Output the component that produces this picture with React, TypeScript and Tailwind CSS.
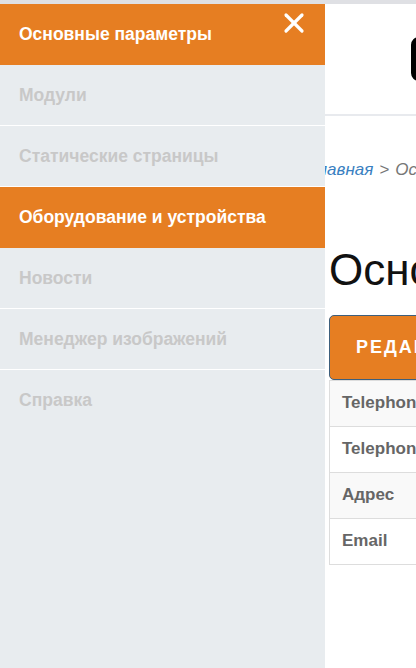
import { X } from "lucide-react";

const menu = [
  { label: "Основные параметры", active: true },
  { label: "Модули", active: false },
  { label: "Статические страницы", active: false },
  { label: "Оборудование и устройства", active: true },
  { label: "Новости", active: false },
  { label: "Менеджер изображений", active: false },
  { label: "Справка", active: false },
];

const rows = ["Telephone", "Telephone", "Адрес", "Email"];

function Sidebar() {
  return (
    <aside className="absolute left-0 top-[4px] bottom-0 z-10 w-[325px] bg-[#e8ecef]">
      <button className="absolute right-[15px] top-[3px] text-white" aria-label="Закрыть">
        <X size={32} strokeWidth={2.4} />
      </button>
      <nav className="flex flex-col">
        {menu.map((item, i) => (
          <a
            key={i}
            href="#"
            className={
              item.active
                ? "flex h-[61px] items-center border-b border-[#e67e22] bg-[#e67e22] px-[19px] text-[17.5px] font-bold text-white"
                : "flex h-[61px] items-center border-b border-white px-[19px] text-[17.5px] font-bold text-[#c8c8c8] last:border-b-0"
            }
          >
            {item.label}
          </a>
        ))}
      </nav>
    </aside>
  );
}

export default function App() {
  return (
    <div
      className="relative h-[668px] w-[416px] overflow-hidden bg-white"
      style={{ fontFamily: '"Liberation Sans", Arial, sans-serif' }}
    >
      <div className="h-[4px] bg-[#dfe0e4]" />
      <Sidebar />

      <main className="whitespace-nowrap">
        <header className="flex h-[112px] items-center border-b-2 border-[#e8eaee]">
          <div className="ml-[411px] h-[44px] w-[44px] shrink-0 rounded-lg border-[5px] border-black" />
        </header>

        <div className="ml-[309px] mt-[41px] text-[17px] italic text-[#777]">
          <a href="#" className="text-[#3a7fc1]">Главная</a>
          <span className="mx-[6px]">&gt;</span>
          <span>Основные параметры</span>
        </div>

        <div className="ml-[329px]">
          <h1 className="mt-[65px] text-[44px] font-normal leading-none text-[#111]">
            Основные параметры
          </h1>

          <button className="mt-[23px] flex h-[65px] w-[300px] items-center rounded-[5px] border border-[#3d5f7d] bg-[#e67e22] px-[26px] text-[18px] font-bold uppercase tracking-[2px] text-white">
            Редактировать
          </button>

          <table className="w-[400px] border-collapse text-[17px]">
            <tbody>
              {rows.map((r, i) => (
                <tr key={i} className={i % 2 === 0 ? "bg-[#f9f9f9]" : "bg-white"}>
                  <td className="h-[46px] border border-[#dddddd] px-[12px] font-bold text-[#666]">
                    {r}
                  </td>
                </tr>
              ))}
            </tbody>
          </table>
        </div>
      </main>
    </div>
  );
}
